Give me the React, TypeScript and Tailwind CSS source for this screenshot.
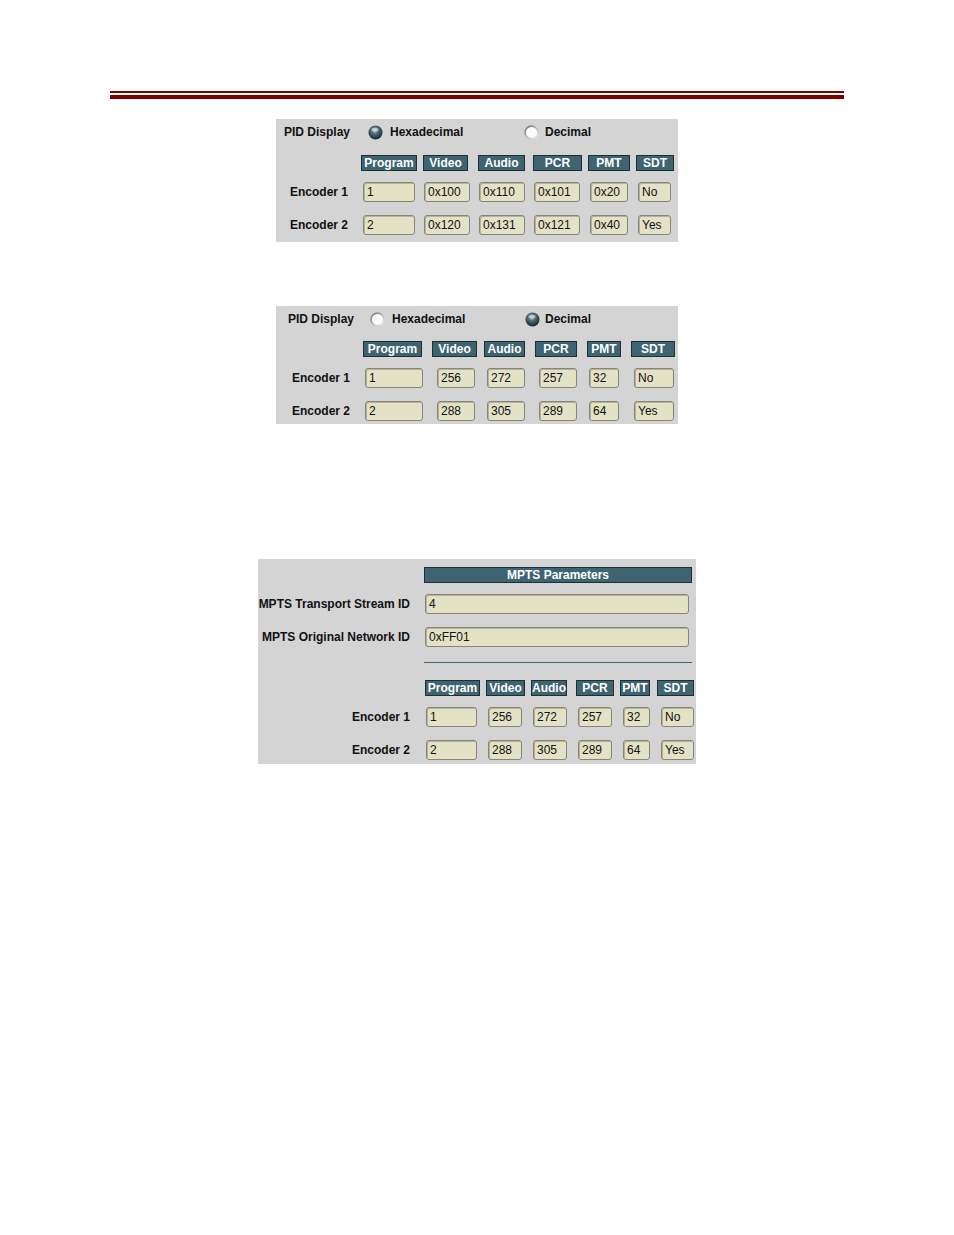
import React from "react";

type Cell = { text: string; cls: string };

const font = "font-['Liberation_Sans',Arial,sans-serif]";

function Radio({ on }: { on: boolean }) {
  return (
    <svg width="15" height="15" viewBox="0 0 15 15" className="shrink-0">
      <defs>
        <radialGradient id="rOn" cx="45%" cy="35%" r="65%">
          <stop offset="0%" stopColor="#b9cacf" />
          <stop offset="40%" stopColor="#4f6b75" />
          <stop offset="100%" stopColor="#17262c" />
        </radialGradient>
        <linearGradient id="rOff" x1="0" y1="0" x2="1" y2="1">
          <stop offset="0%" stopColor="#6f6f6f" />
          <stop offset="55%" stopColor="#b8b8b8" />
          <stop offset="100%" stopColor="#f4f4f4" />
        </linearGradient>
      </defs>
      {on ? (
        <>
          <circle cx="7.5" cy="7.5" r="7" fill="url(#rOn)" />
          <ellipse cx="7" cy="4.6" rx="3.6" ry="1.8" fill="#dfe8eb" opacity="0.6" />
        </>
      ) : (
        <circle cx="7.5" cy="7.5" r="6.4" fill="#fafafa" stroke="url(#rOff)" strokeWidth="1.6" />
      )}
    </svg>
  );
}

function Head({ text, cls }: Cell) {
  return (
    <div
      className={`flex h-[16px] shrink-0 items-center justify-center border border-[#1c2f35] bg-[#3d6470] text-[12px] font-bold leading-none text-white ${cls}`}
    >
      {text}
    </div>
  );
}

function Field({ text, cls }: Cell) {
  return (
    <div
      className={`flex h-[20px] shrink-0 items-center rounded-[3px] border border-[#85857a] bg-[#e4e2c5] pl-[3px] text-[12px] leading-none text-[#111] shadow-[inset_1px_1px_0_#b4b39d] ${cls}`}
    >
      {text}
    </div>
  );
}

const heads1: Cell[] = [
  { text: "Program", cls: "ml-[85px] w-[56px]" },
  { text: "Video", cls: "ml-[6px] w-[45px]" },
  { text: "Audio", cls: "ml-[10px] w-[47px]" },
  { text: "PCR", cls: "ml-[8px] w-[49px]" },
  { text: "PMT", cls: "ml-[6px] w-[42px]" },
  { text: "SDT", cls: "ml-[6px] w-[38px]" },
];
const cols1 = [
  "w-[52px]",
  "ml-[9px] w-[46px]",
  "ml-[9px] w-[46px]",
  "ml-[9px] w-[46px]",
  "ml-[10px] w-[38px]",
  "ml-[10px] w-[33px]",
];

const heads2: Cell[] = [
  { text: "Program", cls: "ml-[87px] w-[59px]" },
  { text: "Video", cls: "ml-[10px] w-[45px]" },
  { text: "Audio", cls: "ml-[7px] w-[41px]" },
  { text: "PCR", cls: "ml-[10px] w-[42px]" },
  { text: "PMT", cls: "ml-[10px] w-[34px]" },
  { text: "SDT", cls: "ml-[10px] w-[44px]" },
];
const cols2 = [
  "w-[58px]",
  "ml-[14px] w-[38px]",
  "ml-[12px] w-[38px]",
  "ml-[14px] w-[38px]",
  "ml-[12px] w-[30px]",
  "ml-[15px] w-[40px]",
];

const heads3: Cell[] = [
  { text: "Program", cls: "ml-[167px] w-[55px]" },
  { text: "Video", cls: "ml-[6px] w-[39px]" },
  { text: "Audio", cls: "ml-[6px] w-[36px]" },
  { text: "PCR", cls: "ml-[9px] w-[38px]" },
  { text: "PMT", cls: "ml-[6px] w-[30px]" },
  { text: "SDT", cls: "ml-[7px] w-[37px]" },
];
const cols3 = [
  "ml-[16px] w-[51px]",
  "ml-[11px] w-[34px]",
  "ml-[11px] w-[34px]",
  "ml-[11px] w-[34px]",
  "ml-[11px] w-[27px]",
  "ml-[11px] w-[33px]",
];

const hexRows = [
  ["1", "0x100", "0x110", "0x101", "0x20", "No"],
  ["2", "0x120", "0x131", "0x121", "0x40", "Yes"],
];
const decRows = [
  ["1", "256", "272", "257", "32", "No"],
  ["2", "288", "305", "289", "64", "Yes"],
];

function Label({ text, cls }: Cell) {
  return <div className={`shrink-0 whitespace-nowrap text-[12px] font-bold text-[#111] ${cls}`}>{text}</div>;
}

function PidPanel({ hex }: { hex: boolean }) {
  const heads = hex ? heads1 : heads2;
  const cols = hex ? cols1 : cols2;
  const rows = hex ? hexRows : decRows;
  return (
    <div className={`mx-auto w-[402px] bg-[#d4d4d4] pt-[5px] ${hex ? "pb-[7px]" : "pb-[3px]"}`}>
      <div className={`flex h-[16px] items-center ${hex ? "pl-[8px]" : "pl-[12px]"}`}>
        <Label text="PID Display" cls={hex ? "w-[84px]" : "w-[82px]"} />
        <Radio on={hex} />
        <Label text="Hexadecimal" cls={`ml-[7px] ${hex ? "w-[134px]" : "w-[133px]"}`} />
        <Radio on={!hex} />
        <Label text="Decimal" cls={hex ? "ml-[6px]" : "ml-[5px]"} />
      </div>
      <div className={`flex ${hex ? "mt-[15px]" : "mt-[14px]"}`}>
        {heads.map((h) => (
          <Head key={h.text} {...h} />
        ))}
      </div>
      {rows.map((r, i) => (
        <div key={i} className={`flex items-center ${i === 0 ? "mt-[11px]" : "mt-[13px]"}`}>
          <Label text={`Encoder ${i + 1}`} cls={hex ? "w-[87px] pl-[14px]" : "w-[89px] pl-[16px]"} />
          {r.map((v, j) => (
            <Field key={j} text={v} cls={cols[j]} />
          ))}
        </div>
      ))}
    </div>
  );
}

function MptsPanel() {
  return (
    <div className="mx-auto w-[438px] bg-[#d4d4d4] pb-[4px] pt-[8px]">
      <div className="flex">
        <Head text="MPTS Parameters" cls="ml-[166px] w-[268px]" />
      </div>
      <div className="mt-[11px] flex items-center">
        <Label text="MPTS Transport Stream ID" cls="w-[152px] text-right" />
        <Field text="4" cls="ml-[15px] w-[264px]" />
      </div>
      <div className="mt-[13px] flex items-center">
        <Label text="MPTS Original Network ID" cls="w-[152px] text-right" />
        <Field text="0xFF01" cls="ml-[15px] w-[264px]" />
      </div>
      <div className="ml-[166px] mt-[15px] h-px w-[268px] bg-[#3d6470]" />
      <div className="mt-[17px] flex">
        {heads3.map((h) => (
          <Head key={h.text} {...h} />
        ))}
      </div>
      {decRows.map((r, i) => (
        <div key={i} className={`flex items-center ${i === 0 ? "mt-[11px]" : "mt-[13px]"}`}>
          <Label text={`Encoder ${i + 1}`} cls="w-[152px] text-right" />
          {r.map((v, j) => (
            <Field key={j} text={v} cls={cols3[j]} />
          ))}
        </div>
      ))}
    </div>
  );
}

export default function App() {
  return (
    <div className={`min-h-[1235px] w-[954px] bg-white ${font}`}>
      <div className="mx-[110px] pt-[91px]">
        <div className="h-[2px] bg-[#800000]" />
        <div className="mt-[2px] h-[4px] bg-[#800000]" />
      </div>
      <div className="mt-[20px]">
        <PidPanel hex />
      </div>
      <div className="mt-[64px]">
        <PidPanel hex={false} />
      </div>
      <div className="mt-[135px]">
        <MptsPanel />
      </div>
    </div>
  );
}
